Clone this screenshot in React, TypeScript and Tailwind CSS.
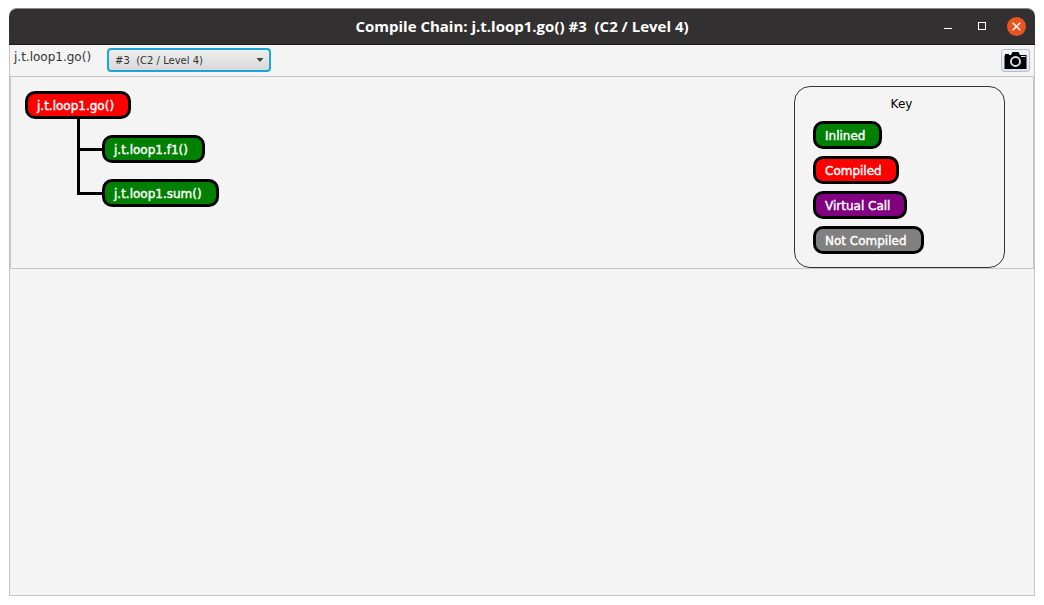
import { useState } from "react";

type Status = "inlined" | "compiled" | "virtual" | "notCompiled";

const FILL: Record<Status, string> = {
  inlined: "bg-[#008000]",
  compiled: "bg-[#ff0000]",
  virtual: "bg-[#800080]",
  notCompiled: "bg-[#808080]",
};

const KEY: { label: string; status: Status }[] = [
  { label: "Inlined", status: "inlined" },
  { label: "Compiled", status: "compiled" },
  { label: "Virtual Call", status: "virtual" },
  { label: "Not Compiled", status: "notCompiled" },
];

const CALLS: { label: string; status: Status }[] = [
  { label: "j.t.loop1.f1()", status: "inlined" },
  { label: "j.t.loop1.sum()", status: "inlined" },
];

const COMPILATIONS = ["#3\u00a0\u00a0(C2 / Level 4)"];

function Pill({ label, status }: { label: string; status: Status }) {
  return (
    <span
      className={`flex h-7 w-fit items-center rounded-[10px] border-3 border-black pt-[2px] pr-[14px] pl-[9px] text-xs whitespace-nowrap text-white [-webkit-text-stroke:0.4px_white] ${FILL[status]}`}
    >
      {label}
    </span>
  );
}

function TitleBar() {
  return (
    <header className="grid h-[37px] shrink-0 grid-cols-[1fr_auto_1fr] items-center rounded-t-lg border-t border-b border-t-[#8a8a8a] border-b-[#1c1c1c] bg-[#333031] pr-[9px] pb-px pl-[9px]">
      <span />
      <h1 className="font-['Open_Sans',sans-serif] text-[15px] leading-5 font-bold text-white">
        Compile Chain: j.t.loop1.go() #3&nbsp;&nbsp;(C2 / Level 4)
      </h1>
      <div className="flex items-center justify-end gap-4">
        <button type="button" aria-label="Minimize" className="flex size-[18px] items-center justify-center">
          <svg width="18" height="18" viewBox="0 0 18 18" fill="none" stroke="#fff" shapeRendering="crispEdges">
            <path d="M5 11.5h8" />
          </svg>
        </button>
        <button type="button" aria-label="Maximize" className="flex size-[18px] items-center justify-center">
          <svg width="18" height="18" viewBox="0 0 18 18" fill="none" stroke="#fff" shapeRendering="crispEdges">
            <path d="M5.5 5.5h7v7h-7z" />
          </svg>
        </button>
        <button type="button" aria-label="Close" className="flex size-[19px] items-center justify-center rounded-full bg-[#e95420]">
          <svg width="19" height="19" viewBox="0 0 19 19" fill="none" stroke="#fff" strokeWidth="1.4">
            <path d="M5.7 5.7l7.6 7.6M13.3 5.7l-7.6 7.6" />
          </svg>
        </button>
      </div>
    </header>
  );
}

function Toolbar() {
  const [selected, setSelected] = useState(COMPILATIONS[0]);
  return (
    <div className="flex h-8 shrink-0 items-start border-b border-[#c8c8c8] pt-[3px] pr-1 pl-1">
      <label htmlFor="compilation" className="pt-px text-xs leading-4 text-[#333333]">
        j.t.loop1.go()
      </label>
      <div className="ml-4 grid items-center">
        <select
          id="compilation"
          value={selected}
          onChange={(e) => setSelected(e.target.value)}
          className="col-start-1 row-start-1 h-6 w-[164px] appearance-none rounded-[4px] border-2 border-[#1ba5d8] bg-linear-to-b from-[#efefef] to-[#d9d9d9] pr-5 pl-[6px] text-[10px] text-[#333333] outline-none"
        >
          {COMPILATIONS.map((c) => (
            <option key={c}>{c}</option>
          ))}
        </select>
        <svg
          className="pointer-events-none col-start-1 row-start-1 mr-[7px] justify-self-end"
          width="8"
          height="4"
          viewBox="0 0 8 4"
          fill="#444"
        >
          <path d="M0.5 0h7L4 4z" />
        </svg>
      </div>
      <button
        type="button"
        aria-label="Save snapshot"
        className="mt-px ml-auto flex h-[23px] w-[29px] items-center justify-center rounded-[3px] border border-[#bcbcc6] bg-linear-to-b from-[#f4f4ff] to-[#e2e2f2]"
      >
        <svg width="23" height="17" viewBox="0 0 23 17">
          <path d="M1 3.500V2h4v1h2l1.500-3h6L16 3h6.500v14H0.500V3.500z" fill="#000" />
          <path d="M17 4.500h4.500" stroke="#e8e8f6" strokeWidth="1" />
          <circle cx="11.500" cy="9.500" r="4.500" fill="#000" stroke="#e0e0ee" strokeWidth="1.900" />
        </svg>
      </button>
    </div>
  );
}

function CallTree() {
  return (
    <div className="pt-[14px] pl-[14px]">
      <Pill label="j.t.loop1.go()" status="compiled" />
      <ul className="pl-[52px]">
        {CALLS.map((call, i) => (
          <li key={call.label} className="flex h-11">
            <div className="flex w-[25px] flex-col">
              <div className="h-8 border-b-3 border-l-3 border-black" />
              {i < CALLS.length - 1 && <div className="grow border-l-3 border-black" />}
            </div>
            <div className="pt-4">
              <Pill label={call.label} status={call.status} />
            </div>
          </li>
        ))}
      </ul>
    </div>
  );
}

function Key() {
  return (
    <section className="mt-[9px] mr-7 w-[211px] rounded-[16px] border border-[#333333] px-[18px] pt-2 pb-[13px]">
      <h2 className="pl-1 text-center text-xs leading-[18px] text-black">Key</h2>
      <ul className="flex flex-col gap-[7px] pt-2">
        {KEY.map((k) => (
          <li key={k.label}>
            <Pill label={k.label} status={k.status} />
          </li>
        ))}
      </ul>
    </section>
  );
}

export default function App() {
  return (
    <div className="flex min-h-screen bg-white px-[9px] pt-2 pb-[9px] font-['DejaVu_Sans',sans-serif]">
      <div className="flex grow flex-col">
        <TitleBar />
        <div className="flex grow flex-col border-x border-b border-[#c4c4c4] bg-[#f4f4f4]">
          <Toolbar />
          <main className="flex items-start justify-between border-x border-b border-[#c8c8c8]">
            <CallTree />
            <Key />
          </main>
        </div>
      </div>
    </div>
  );
}
